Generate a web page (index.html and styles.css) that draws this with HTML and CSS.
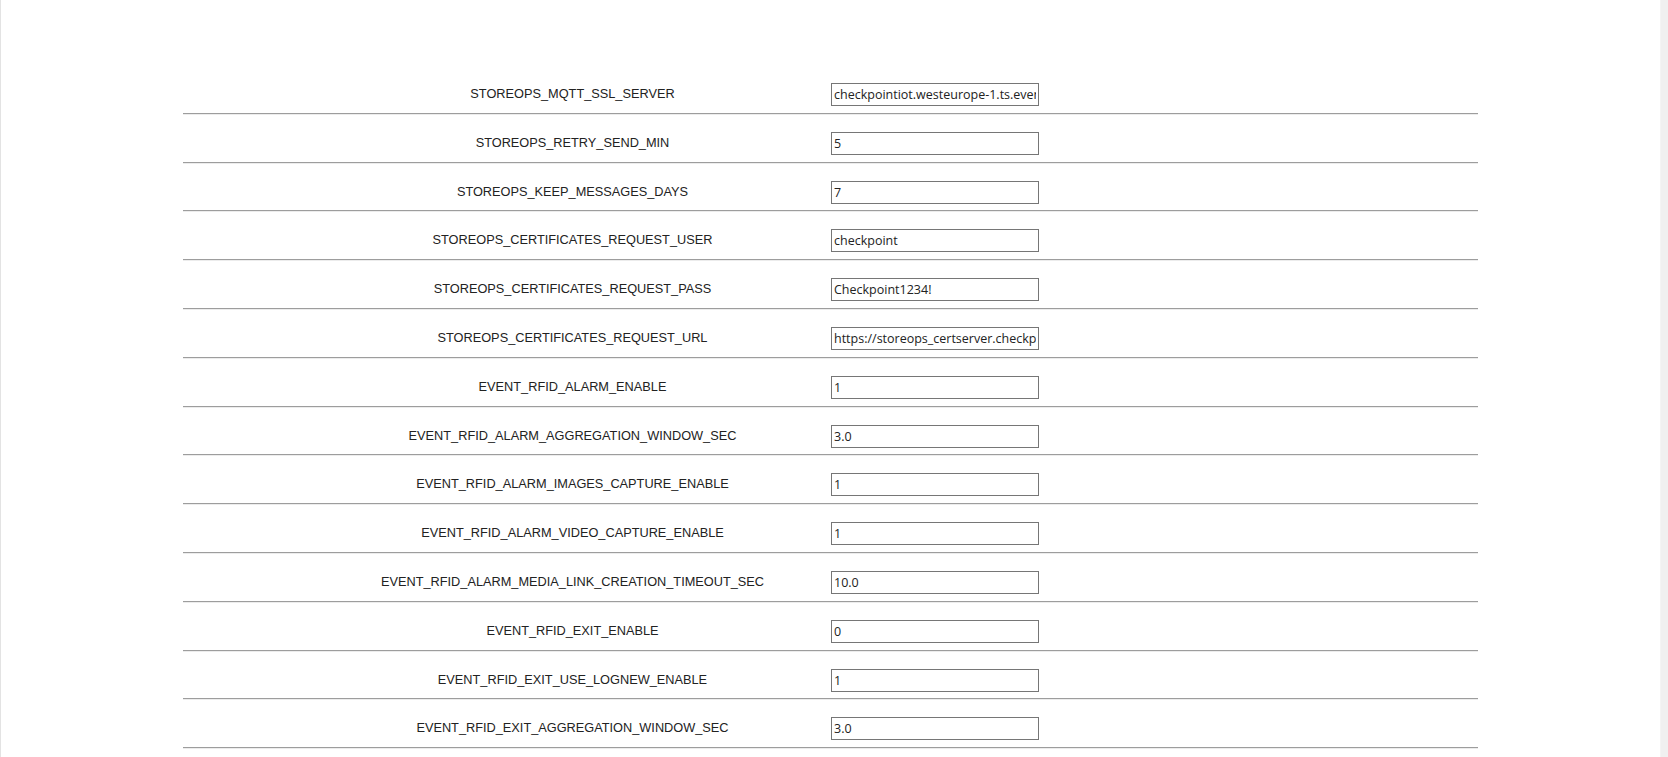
FILE: index.html
```html
<!DOCTYPE html>
<html lang="en">
<head>
<meta charset="utf-8">
<title>Settings</title>
<link rel="stylesheet" href="styles.css">
</head>
<body>
<div class="page">
  <div class="content">
    <div class="settings">
      <div class="row"><div class="label">STOREOPS_MQTT_SSL_SERVER</div><div class="value"><input class="field" type="text" value="checkpointiot.westeurope-1.ts.eventgrid.azure.net"></div></div>
      <div class="row"><div class="label">STOREOPS_RETRY_SEND_MIN</div><div class="value"><input class="field" type="text" value="5"></div></div>
      <div class="row"><div class="label">STOREOPS_KEEP_MESSAGES_DAYS</div><div class="value"><input class="field" type="text" value="7"></div></div>
      <div class="row"><div class="label">STOREOPS_CERTIFICATES_REQUEST_USER</div><div class="value"><input class="field" type="text" value="checkpoint"></div></div>
      <div class="row"><div class="label">STOREOPS_CERTIFICATES_REQUEST_PASS</div><div class="value"><input class="field" type="text" value="Checkpoint1234!"></div></div>
      <div class="row"><div class="label">STOREOPS_CERTIFICATES_REQUEST_URL</div><div class="value"><input class="field" type="text" value="https://storeops_certserver.checkpoint.com"></div></div>
      <div class="row"><div class="label">EVENT_RFID_ALARM_ENABLE</div><div class="value"><input class="field" type="text" value="1"></div></div>
      <div class="row"><div class="label">EVENT_RFID_ALARM_AGGREGATION_WINDOW_SEC</div><div class="value"><input class="field" type="text" value="3.0"></div></div>
      <div class="row"><div class="label">EVENT_RFID_ALARM_IMAGES_CAPTURE_ENABLE</div><div class="value"><input class="field" type="text" value="1"></div></div>
      <div class="row"><div class="label">EVENT_RFID_ALARM_VIDEO_CAPTURE_ENABLE</div><div class="value"><input class="field" type="text" value="1"></div></div>
      <div class="row"><div class="label">EVENT_RFID_ALARM_MEDIA_LINK_CREATION_TIMEOUT_SEC</div><div class="value"><input class="field" type="text" value="10.0"></div></div>
      <div class="row"><div class="label">EVENT_RFID_EXIT_ENABLE</div><div class="value"><input class="field" type="text" value="0"></div></div>
      <div class="row"><div class="label">EVENT_RFID_EXIT_USE_LOGNEW_ENABLE</div><div class="value"><input class="field" type="text" value="1"></div></div>
      <div class="row"><div class="label">EVENT_RFID_EXIT_AGGREGATION_WINDOW_SEC</div><div class="value"><input class="field" type="text" value="3.0"></div></div>
    </div>
  </div>
  <div class="scroll-track"></div>
</div>
</body>
</html>
```

FILE: styles.css
```css
* { box-sizing: border-box; }

html, body {
  margin: 0;
  padding: 0;
  height: 100%;
  overflow: hidden;
  background: #ffffff;
}

body {
  font-family: "Liberation Sans", Arial, sans-serif;
  color: #222222;
}

.page {
  display: flex;
  height: 100%;
  border-left: 1px solid #e3e3e3;
}

.content {
  flex: 1;
  padding-top: 65px;
  overflow: hidden;
}

.scroll-track {
  width: 8px;
  flex: none;
  background: #f0f0f0;
  border-left: 1px solid #f4f4f4;
}

.settings {
  width: 1295px;
  margin: 0 auto;
  display: flex;
  flex-direction: column;
}

.row {
  display: grid;
  grid-template-columns: 648px 1fr;
  height: 48.8px;
  padding-top: 18px;
  border-bottom: 1px solid #9d9d9d;
  box-shadow: 0 1px 0 #ececec;
  align-items: start;
}

.label {
  padding-left: 131px;
  text-align: center;
  font-size: 12.75px;
  line-height: 22px;
  color: #222222;
  white-space: nowrap;
}

.value {
  display: flex;
}

.field {
  width: 208px;
  height: 23px;
  margin: 0;
  padding: 1px 2px;
  border: 1px solid #767676;
  border-radius: 0;
  font-family: "Open Sans", "Liberation Sans", sans-serif;
  font-size: 12.5px;
  color: #222222;
  background: #ffffff;
  outline: none;
}
```
